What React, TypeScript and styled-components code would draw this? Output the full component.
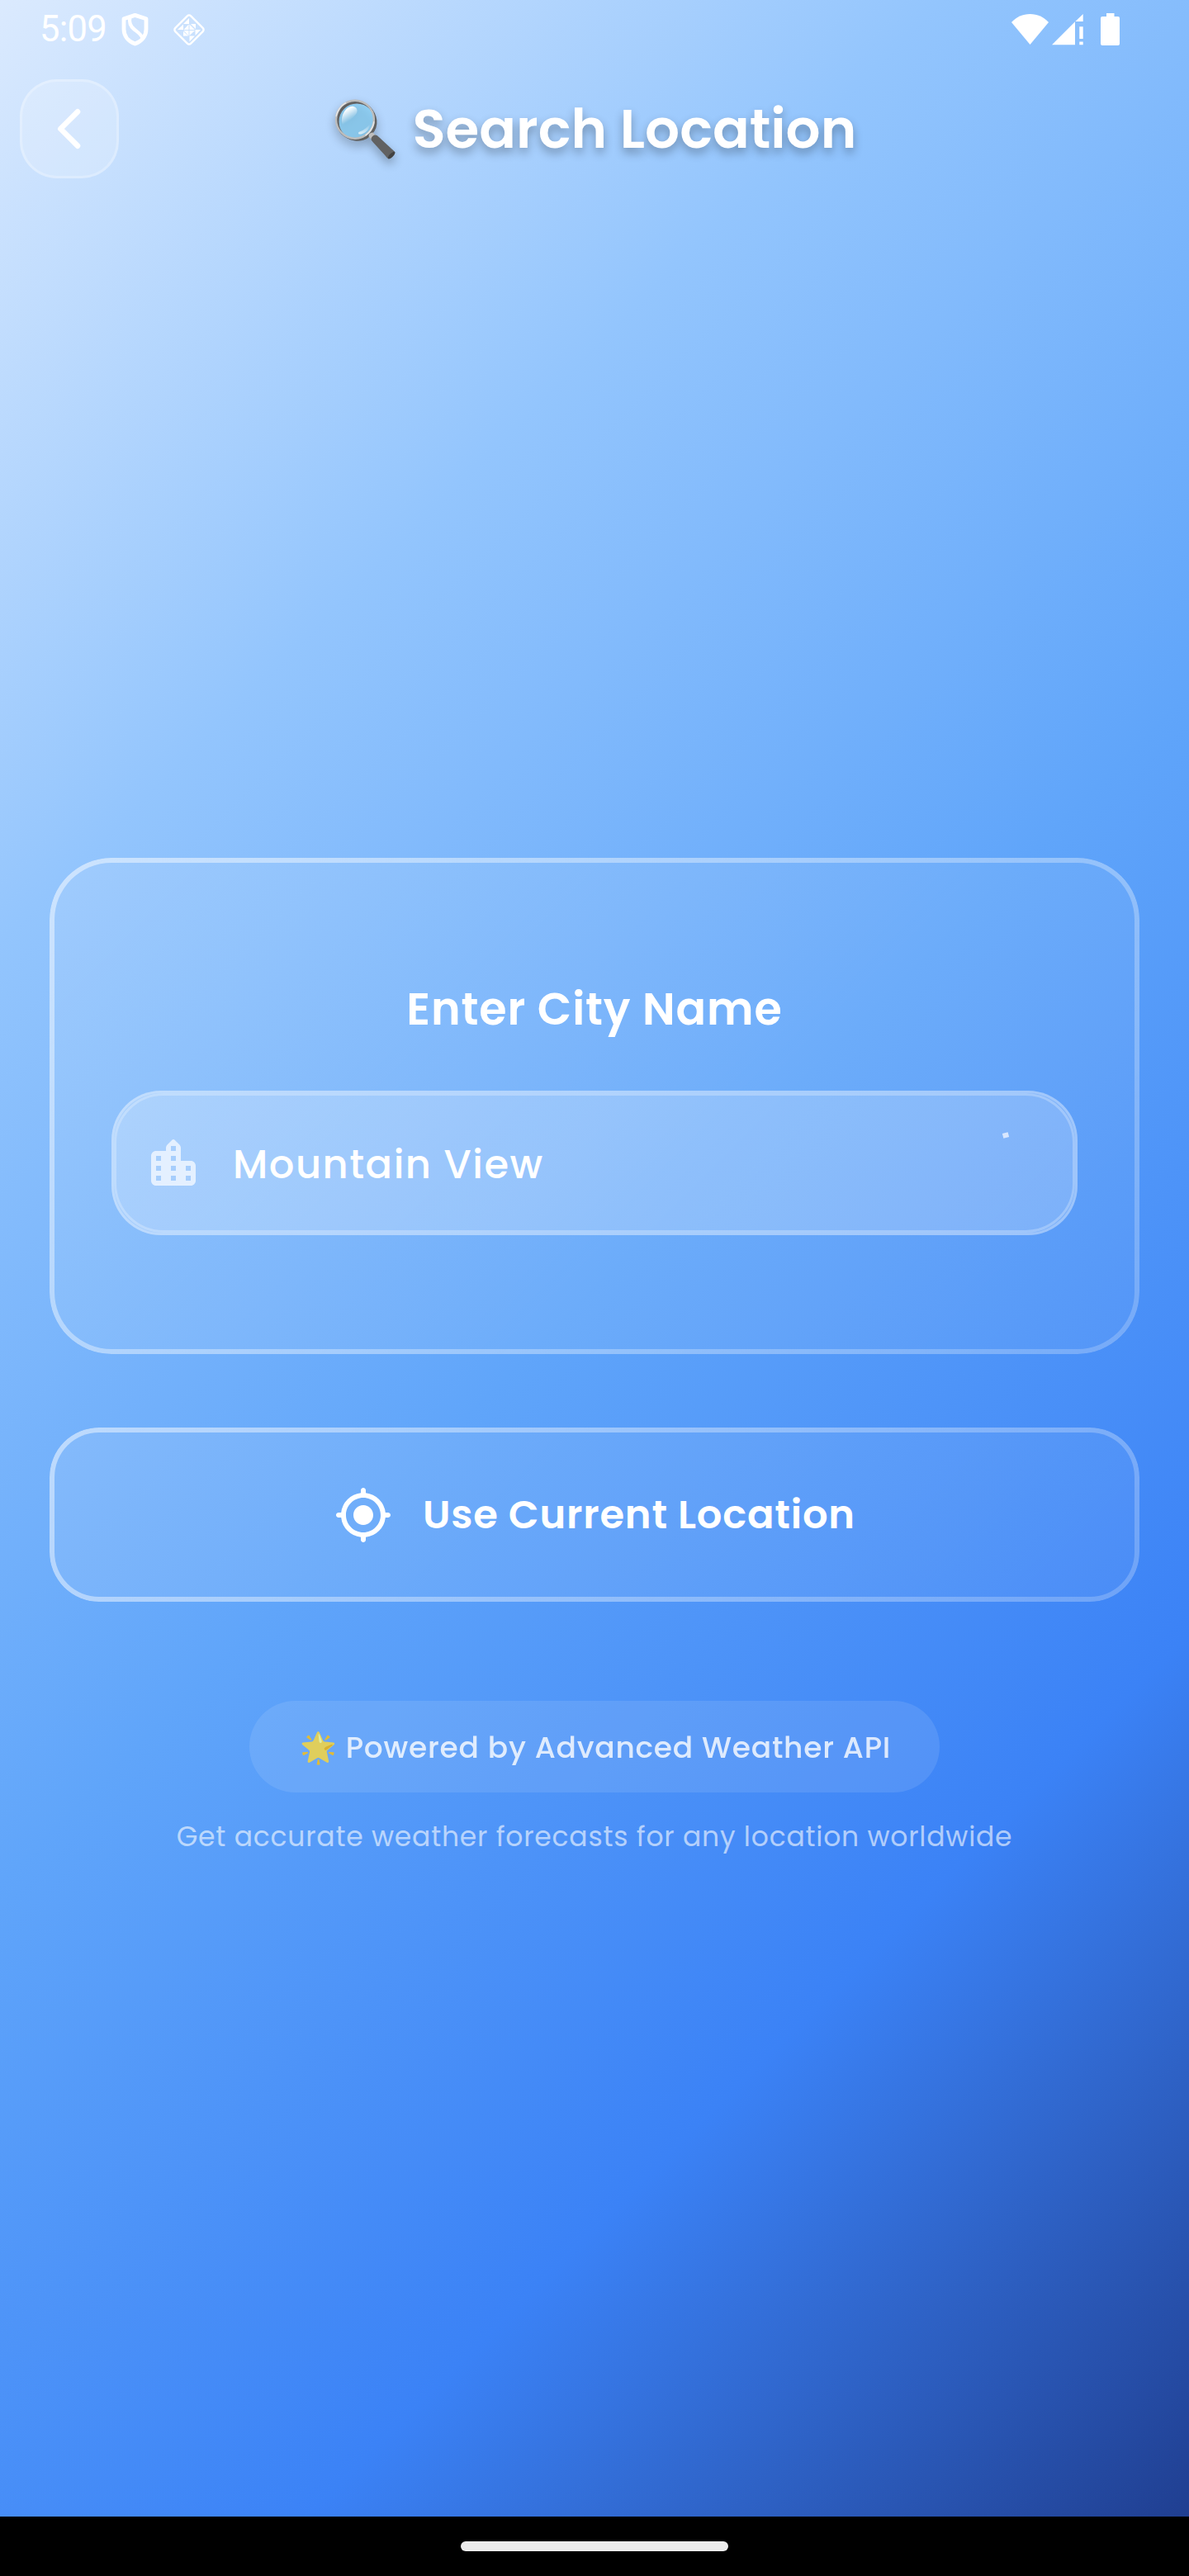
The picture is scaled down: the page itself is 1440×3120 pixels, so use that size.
import React from "react";
import styled, { createGlobalStyle, css } from "styled-components";

const GlobalStyle = createGlobalStyle`
  body {
    margin: 0;
    background: #000;
  }
  *, *::before, *::after {
    box-sizing: border-box;
  }
`;

const Screen = styled.div`
  display: flex;
  flex-direction: column;
  width: 1440px;
  height: 3120px;
  overflow: hidden;
  color: #fff;
  font-family: Poppins, Inter, "Noto Color Emoji", sans-serif;
  background: linear-gradient(135deg, #dbeafe 0%, #93c5fd 25%, #60a5fa 50%, #3b82f6 75%, #1e3a8a 100%);
`;

/* ---------- status bar ---------- */

const StatusBar = styled.div`
  display: flex;
  align-items: center;
  height: 72px;
  padding: 0 84px 0 48px;
`;

const Clock = styled.span`
  width: 99px;
  font-family: Roboto, sans-serif;
  font-size: 43.5px;
  line-height: 72px;
  letter-spacing: -0.7px;
`;

const StatusIcon = styled.svg<{ $w: number; $gap?: number }>`
  display: block;
  flex: none;
  width: ${(p) => p.$w}px;
  height: 42px;
  margin-left: ${(p) => p.$gap ?? 0}px;
`;

const StatusRight = styled.div`
  display: flex;
  margin-left: auto;
`;

/* ---------- header ---------- */

const Header = styled.header`
  display: flex;
  align-items: center;
  height: 120px;
  margin: 24px 24px 0;
`;

const BackButton = styled.button`
  display: flex;
  align-items: center;
  justify-content: center;
  width: 120px;
  height: 120px;
  padding: 0;
  border: 3px solid rgba(255, 255, 255, 0.24);
  border-radius: 45px;
  background: rgba(255, 255, 255, 0.2);
  color: inherit;
`;

const Title = styled.h1`
  margin: 0 0 0 257.5px;
  font-size: 66px;
  font-weight: 600;
  line-height: 80px;
  white-space: nowrap;
  text-shadow: 0 6px 12px rgba(0, 0, 0, 0.3);
`;

/* ---------- glass surfaces ---------- */

const glass = css<{ $radius: number }>`
  position: relative;
  border-radius: ${(p) => p.$radius}px;
  background: linear-gradient(135deg, rgba(255, 255, 255, 0.11), rgba(255, 255, 255, 0.06));

  &::before {
    content: "";
    position: absolute;
    inset: 0;
    padding: 6px;
    border-radius: inherit;
    background: linear-gradient(135deg, rgba(255, 255, 255, 0.48), rgba(255, 255, 255, 0.2));
    mask: linear-gradient(#000 0 0) content-box exclude, linear-gradient(#000 0 0);
    pointer-events: none;
  }
`;

const Content = styled.main`
  display: flex;
  flex-direction: column;
  flex: 1;
  padding: 823px 60px 0;
`;

const SearchCard = styled.section<{ $radius: number }>`
  ${glass}
  height: 601px;
  padding: 144px 75px 0;
`;

const CardHeading = styled.h2`
  margin: 0 0 60px;
  font-size: 54px;
  font-weight: 600;
  line-height: 78px;
  letter-spacing: 0.85px;
  text-align: center;
`;

const Field = styled.div`
  display: flex;
  align-items: center;
  gap: 36px;
  position: relative;
  height: 175px;
  padding: 0 51px 0 39px;
  border-radius: 60px;
  background: linear-gradient(135deg, rgba(255, 255, 255, 0.26), rgba(255, 255, 255, 0.2));
  box-shadow: inset 0 0 0 3px rgba(255, 255, 255, 0.25);

  &::after {
    content: "";
    position: absolute;
    inset: 3px;
    border: 3px solid rgba(255, 255, 255, 0.26);
    border-radius: 60px;
    pointer-events: none;
  }
`;

const CityIcon = styled.svg`
  flex: none;
  width: 72px;
  height: 72px;
  fill: #e4f0ff;
`;

const FieldValue = styled.span`
  padding-top: 4px;
  font-size: 48px;
  font-weight: 500;
  line-height: 60px;
  letter-spacing: 1.5px;
`;

const Spinner = styled.svg`
  width: 72px;
  height: 72px;
  margin-left: auto;
  overflow: visible;
`;

const LocationButton = styled.button<{ $radius: number }>`
  ${glass}
  display: flex;
  align-items: center;
  height: 211px;
  margin-top: 89px;
  padding: 0 0 0 344px;
  border: 0;
  color: inherit;
  font: inherit;
`;

const LocationIcon = styled.svg`
  flex: none;
  width: 72px;
  height: 72px;
  margin-right: 36px;
  fill: #fff;
`;

const ButtonLabel = styled.span`
  font-size: 48px;
  font-weight: 600;
  line-height: 70px;
  letter-spacing: 0.8px;
`;

/* ---------- footer ---------- */

const Credit = styled.div`
  display: flex;
  align-items: center;
  align-self: center;
  width: 836px;
  height: 111px;
  margin-top: 120px;
  padding-left: 61px;
  border-radius: 60px;
  background: rgba(255, 255, 255, 0.1);
`;

const CreditText = styled.span`
  padding-top: 2px;
  font-size: 36px;
  font-weight: 500;
  line-height: 48px;
  letter-spacing: 0.75px;
  white-space: nowrap;
  opacity: 0.8;
`;

const Tagline = styled.p`
  margin: 30px 0 0;
  color: rgba(255, 255, 255, 0.6);
  font-size: 33px;
  line-height: 48px;
  letter-spacing: 0.77px;
  text-align: center;
  white-space: nowrap;
`;

const NavBar = styled.div`
  display: flex;
  justify-content: center;
  height: 72px;
  padding-top: 30px;
  background: #000;
`;

const NavHandle = styled.div`
  width: 324px;
  height: 12px;
  border-radius: 6px;
  background: #ebebeb;
`;

export default function App() {
  return (
    <>
      <GlobalStyle />
      <Screen>
        <StatusBar>
          <Clock>5:09</Clock>
          <StatusIcon $w={33} viewBox="0 0 33 42" fill="none" stroke="#fff">
            <path d="M16.5 3.4 30 7.8v12.4c0 8.6-5.4 14.9-13.5 17.8C8.4 35.1 3 28.8 3 20.2V7.8Z" strokeWidth="4.8" strokeLinejoin="round" />
            <path d="M10.5 5.5C9 12 11 17 15.5 20.5S25 27 25.5 31.5" strokeWidth="4.2" />
          </StatusIcon>
          <StatusIcon $w={42} $gap={28} viewBox="0 0 42 42">
            <rect x="7.7" y="7.7" width="26.6" height="26.6" rx="3" transform="rotate(45 21 21)" fill="none" stroke="#fff" strokeWidth="2.4" />
            <g fill="#fff">
              <path d="M14 14l7-7v7zM7 21l7-6.5V21zM28.5 21H35l-6.5 7zM21.5 28.5H28l-6.5 7z" />
              <path d="M14.5 21l6-6.5V21zM21.5 14.5l6.5 6.5h-6.5zM14.5 22h6v6.5zM21.5 22H28l-6.5 6zM23 14h6v6zM14 23v5.5h6z" />
            </g>
          </StatusIcon>
          <StatusRight>
            <StatusIcon $w={45} viewBox="0 0 45 42" fill="#fff">
              <path d="M22.5 39 0 12C6 5.5 13.5 2 22.5 2S39 5.5 45 12Z" />
            </StatusIcon>
            <StatusIcon $w={38} $gap={4} viewBox="0 0 38 42" fill="#fff">
              <path d="M0 39.3 28 11.3v28ZM28.3 11 37.7 2v9ZM33.3 17.3h4.4V32h-4.4ZM33.3 35.5h4.4v3.8h-4.4Z" />
            </StatusIcon>
            <StatusIcon $w={23} $gap={21} viewBox="0 0 23 42" fill="#fff">
              <path d="M7 1h9.5v4H21a2 2 0 0 1 2 2v31a2 2 0 0 1-2 2H2a2 2 0 0 1-2-2V7a2 2 0 0 1 2-2h5Z" />
            </StatusIcon>
          </StatusRight>
        </StatusBar>

        <Header>
          <BackButton aria-label="Back">
            <svg width="54" height="54" viewBox="0 0 54 54" fill="none" stroke="#fff" strokeWidth="6.6" strokeLinecap="round" strokeLinejoin="round">
              <path d="M37 6.3 16.3 27 37 47.7" />
            </svg>
          </BackButton>
          <Title>🔍 Search Location</Title>
        </Header>

        <Content>
          <SearchCard $radius={75}>
            <CardHeading>Enter City Name</CardHeading>
            <Field>
              <CityIcon viewBox="0 0 24 24">
                <path d="M15 11V5.83c0-.53-.21-1.04-.59-1.41L12.7 2.71a.996.996 0 0 0-1.41 0l-1.7 1.7C9.21 4.79 9 5.3 9 5.83V7H5c-1.1 0-2 .9-2 2v10c0 1.1.9 2 2 2h14c1.1 0 2-.9 2-2v-6c0-1.1-.9-2-2-2h-4zm-8 8H5v-2h2v2zm0-4H5v-2h2v2zm0-4H5V9h2v2zm6 8h-2v-2h2v2zm0-4h-2v-2h2v2zm0-4h-2V9h2v2zm0-4h-2V5h2v2zm6 12h-2v-2h2v2zm0-4h-2v-2h2v2z" />
              </CityIcon>
              <FieldValue>Mountain View</FieldValue>
              <Spinner viewBox="0 0 72 72">
                <rect x="32.5" y="-1" width="7" height="6" transform="rotate(-15 36 2)" fill="#d8e7fe" />
              </Spinner>
            </Field>
          </SearchCard>

          <LocationButton $radius={60}>
            <LocationIcon viewBox="0 0 24 24">
              <path d="M12 8c-2.21 0-4 1.79-4 4s1.79 4 4 4 4-1.79 4-4-1.79-4-4-4zm8.94 3A8.994 8.994 0 0 0 13 3.06V2c0-.55-.45-1-1-1s-1 .45-1 1v1.06A8.994 8.994 0 0 0 3.06 11H2c-.55 0-1 .45-1 1s.45 1 1 1h1.06A8.994 8.994 0 0 0 11 20.94V22c0 .55.45 1 1 1s1-.45 1-1v-1.06A8.994 8.994 0 0 0 20.94 13H22c.55 0 1-.45 1-1s-.45-1-1-1h-1.06zM12 19c-3.87 0-7-3.13-7-7s3.13-7 7-7 7 3.13 7 7-3.13 7-7 7z" />
            </LocationIcon>
            <ButtonLabel>Use Current Location</ButtonLabel>
          </LocationButton>

          <Credit>
            <CreditText>🌟 Powered by Advanced Weather API</CreditText>
          </Credit>
          <Tagline>Get accurate weather forecasts for any location worldwide</Tagline>
        </Content>

        <NavBar>
          <NavHandle />
        </NavBar>
      </Screen>
    </>
  );
}
